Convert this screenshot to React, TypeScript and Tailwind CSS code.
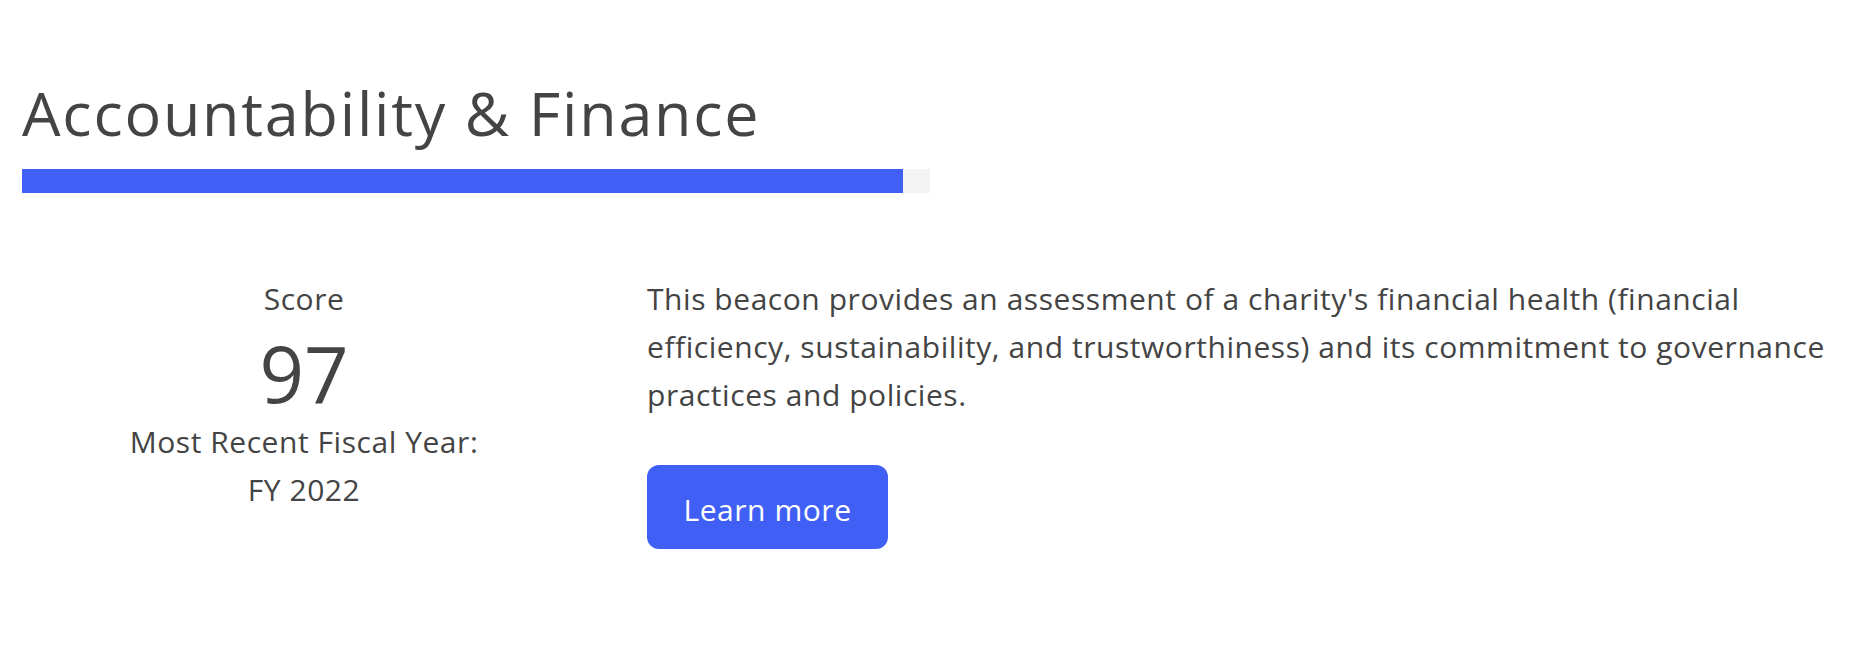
export default function App() {
  const score = 97

  return (
    <div className="min-h-[646px] w-full bg-white px-[22px] pt-[76px] font-['Open_Sans',sans-serif] text-[#444444]">
      <h1 className="text-[61px] leading-[74px] font-normal tracking-[1.8px]">Accountability &amp; Finance</h1>

      <div className="mt-[19px] h-[24px] w-[908px] bg-[#f3f3f3]">
        <div className="h-full bg-[#4060f5]" style={{ width: `${score}%` }} />
      </div>

      <div className="mt-[82px] flex tracking-[0.55px]">
        <div className="flex w-[564px] shrink-0 flex-col items-center text-[30px] leading-[48px]">
          <p className="mb-[6px]">Score</p>
          <p className="text-[78px] leading-[89px] tracking-normal">{score}</p>
          <p>Most Recent Fiscal Year:</p>
          <p>FY 2022</p>
        </div>

        <div className="ml-[61px] w-[1195px]">
          <p className="text-[30px] leading-[48px]">
            This beacon provides an assessment of a charity's financial health (financial efficiency,
            sustainability, and trustworthiness) and its commitment to governance practices and policies.
          </p>
          <button className="mt-[46px] flex h-[84px] w-[241px] items-center justify-center rounded-[12px] bg-[#4060f5] pt-[4px] text-[30px] text-white">
            Learn more
          </button>
        </div>
      </div>
    </div>
  )
}
